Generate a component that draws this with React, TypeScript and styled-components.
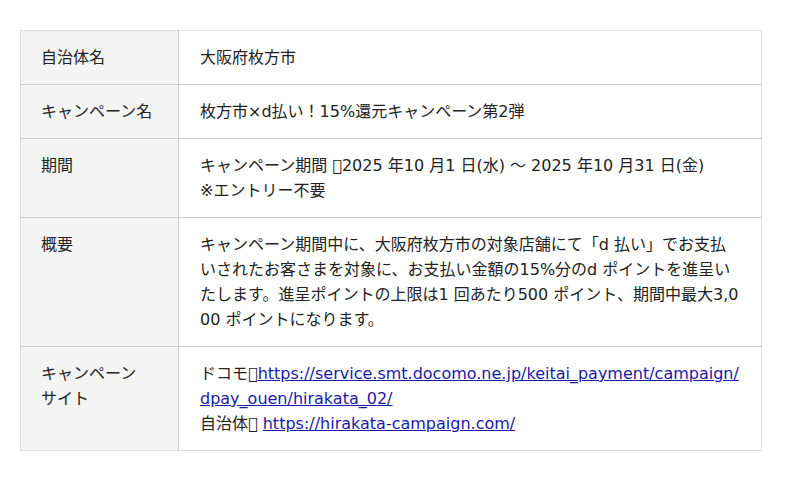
import React from 'react';
import styled, { createGlobalStyle } from 'styled-components';

const GlobalStyle = createGlobalStyle`
  body {
    margin: 0;
    background: #fff;
    font-family: "DejaVu Sans", "Noto Sans CJK JP", sans-serif;
    color: #222;
  }
`;

const Page = styled.div`
  padding: 30px 20px;
`;

const InfoTable = styled.table`
  width: 742px;
  border-collapse: collapse;
  border: 1px solid #ddd;
  font-size: 16px;
  line-height: 25px;
`;

const Row = styled.tr`
  border-bottom: 1px solid #ccc;

  &:last-child {
    border-bottom: 1px solid #ddd;
  }
`;

const Label = styled.th`
  width: 158px;
  box-sizing: border-box;
  padding: 14px 20px;
  background: #f4f4f4;
  border-right: 1px solid #ccc;
  text-align: left;
  vertical-align: top;
  font-weight: normal;
`;

const Value = styled.td`
  padding: 14px 20px 14px 21px;
  vertical-align: top;
  word-break: break-all;
`;

const Link = styled.a`
  color: #1a1aa6;
  text-decoration: underline;
`;

// the source has an unrenderable separator glyph here; keep it as a missing-glyph box
const TOFU = '\uE000';

export default function App() {
  return (
    <>
      <GlobalStyle />
      <Page>
        <InfoTable>
          <tbody>
            <Row>
              <Label>自治体名</Label>
              <Value>大阪府枚方市</Value>
            </Row>
            <Row>
              <Label>キャンペーン名</Label>
              <Value>枚方市×d払い！15%還元キャンペーン第2弾</Value>
            </Row>
            <Row>
              <Label>期間</Label>
              <Value>
                キャンペーン期間 {TOFU}2025 年10 月1 日(水) ～ 2025 年10 月31 日(金)
                <br />
                ※エントリー不要
              </Value>
            </Row>
            <Row>
              <Label>概要</Label>
              <Value>
                キャンペーン期間中に、大阪府枚方市の対象店舗にて「d 払い」でお支払いされたお客さまを対象に、お支払い金額の15%分のd ポイントを進呈いたします。進呈ポイントの上限は1 回あたり500 ポイント、期間中最大3,000 ポイントになります。
              </Value>
            </Row>
            <Row>
              <Label>キャンペーン<br />サイト</Label>
              <Value>
                ドコモ{TOFU}<Link href="#">https://service.smt.docomo.ne.jp/keitai_payment/campaign/dpay_ouen/hirakata_02/</Link>
                <br />
                自治体{TOFU} <Link href="#">https://hirakata-campaign.com/</Link>
              </Value>
            </Row>
          </tbody>
        </InfoTable>
      </Page>
    </>
  );
}
